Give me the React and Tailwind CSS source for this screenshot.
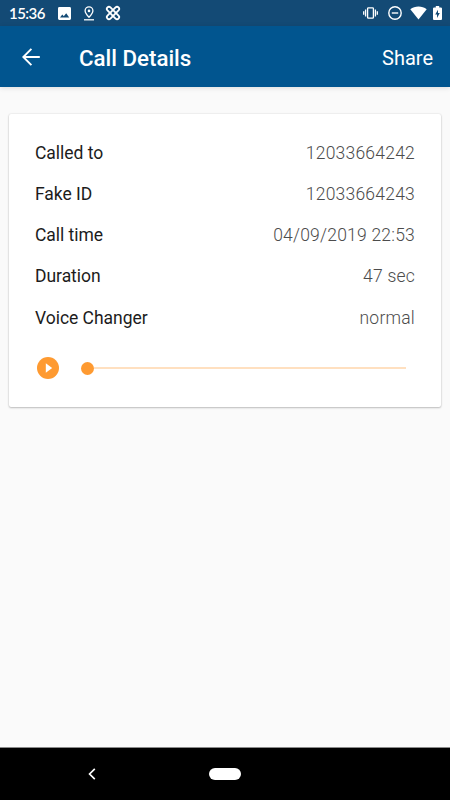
import React from 'react';

const details = [
  { label: 'Called to', value: '12033664242' },
  { label: 'Fake ID', value: '12033664243' },
  { label: 'Call time', value: '04/09/2019 22:53' },
  { label: 'Duration', value: '47 sec' },
  { label: 'Voice Changer', value: 'normal' },
];

function StatusBar() {
  return (
    <div className="h-[26px] shrink-0 bg-[#134a75] text-white flex items-center justify-between pl-[9px] pr-[8px]">
      <div className="flex items-center">
        <span className="w-[49px] pt-px font-['Lato',sans-serif] text-[15px] leading-none font-semibold tracking-[-0.55px]">15:36</span>
        {/* image */}
        <svg className="w-[13px] h-[13px]" viewBox="0 0 13 13">
          <path fill="currentColor" fillRule="evenodd" d="M1.4 0h10.2Q13 0 13 1.4v10.2Q13 13 11.6 13H1.4Q0 13 0 11.6V1.4Q0 0 1.4 0zM2 10.5h9.2L8.2 6.3 5.8 9.3 4.3 7.4z" />
        </svg>
        {/* location pin */}
        <svg className="ml-[12px] w-[12px] h-[15px]" viewBox="0 0 12 15" fill="none" stroke="currentColor" strokeWidth="1.3">
          <path d="M6 11.2C3.4 8.6 2.1 6.7 2.1 4.8a3.9 3.9 0 0 1 7.8 0C9.9 6.7 8.6 8.6 6 11.2z" />
          <circle cx="6" cy="4.9" r="1.3" fill="currentColor" stroke="none" />
          <path d="M1 13.8h10" />
        </svg>
        {/* crossed loops */}
        <svg className="ml-[10px] w-[16px] h-[16px]" viewBox="0 0 16 16" fill="none" stroke="currentColor" strokeWidth="1.8">
          <rect x="5.9" y="0.2" width="4.2" height="15.6" rx="2.1" transform="rotate(45 8 8)" />
          <rect x="5.9" y="0.2" width="4.2" height="15.6" rx="2.1" transform="rotate(-45 8 8)" />
        </svg>
      </div>
      <div className="flex items-center">
        {/* vibrate */}
        <svg className="w-[15px] h-[14px]" viewBox="0 0 15 14" fill="none" stroke="currentColor" strokeWidth="1.3">
          <rect x="4.6" y="1.8" width="5.8" height="10.4" rx="0.8" />
          <path d="M2.6 3.5v7M12.4 3.5v7M0.7 5.2v3.6M14.3 5.2v3.6" />
        </svg>
        {/* do not disturb */}
        <svg className="ml-[10px] w-[14px] h-[14px]" viewBox="0 0 14 14" fill="none" stroke="currentColor" strokeWidth="1.4">
          <circle cx="7" cy="7" r="6.2" />
          <path d="M3.8 7h6.4" />
        </svg>
        {/* wifi */}
        <svg className="ml-[8px] w-[17px] h-[14px]" viewBox="0 0 17 14">
          <path fill="currentColor" d="M8.5 13.6L0.3 3.2C2.6 1.4 5.4.4 8.5.4s5.9 1 8.2 2.8z" />
        </svg>
        {/* battery */}
        <svg className="ml-[6px] w-[9px] h-[14px]" viewBox="0 0 9 14">
          <path fill="currentColor" d="M2.8 0h3.4v1.4h1.6Q9 1.4 9 2.4v10.4Q9 14 8 14H1Q0 14 0 12.8V2.4Q0 1.4 1.2 1.4h1.6z" />
          <path fill="#134a75" d="M5 3.8v3.1h1.8L4 11.9V8.5H2.2z" />
        </svg>
      </div>
    </div>
  );
}

function Header() {
  return (
    <div className="relative h-[61px] shrink-0 bg-[#01558f] text-white flex items-center pl-[22px] pr-[17px] pt-[3px] shadow-[0_1px_5px_rgba(0,0,0,0.12)]">
      <svg className="w-[18px] h-[18px] -mt-[2px]" viewBox="0 0 18 18" fill="none" stroke="currentColor" strokeWidth="1.9">
        <path d="M17.8 9H1.5M9.4 0.9L1.3 9l8.1 8.1" />
      </svg>
      <h1 className="ml-[39px] text-[22.3px] leading-none font-medium">Call Details</h1>
      <span className="ml-auto -mt-px text-[20px] leading-none">Share</span>
    </div>
  );
}

function Player() {
  return (
    <div className="flex items-center h-[22px] pl-[2px] pr-[9px]">
      <svg className="w-[22px] h-[22px]" viewBox="0 0 22 22">
        <circle cx="11" cy="11" r="11" fill="#fe9a31" />
        <path d="M8.8 6.2v9.6l6.4-4.8z" fill="white" />
      </svg>
      <div className="ml-[22px] flex-1 flex items-center">
        <div className="w-[13px] h-[13px] rounded-full bg-[#fe9a31]" />
        <div className="flex-1 h-[2px] bg-[#ffe0c0]" />
      </div>
    </div>
  );
}

export default function App() {
  return (
    <div className="w-[450px] h-[800px] bg-[#fafafa] flex flex-col overflow-hidden font-['Roboto',sans-serif]">
      <StatusBar />
      <Header />
      <main className="flex-1 px-[9px] pt-[27px]">
        <div className="h-[293px] rounded-[2px] bg-white px-[26px] pt-[18px] shadow-[0_1px_2px_rgba(0,0,0,0.22),0_0_2px_rgba(0,0,0,0.14)]">
          {details.map(item => (
            <div key={item.label} className="h-[41.25px] flex items-center justify-between text-[17.5px]">
              <span className="text-[#1c1c1c] tracking-[-0.03px]">{item.label}</span>
              <span className="font-light text-[#4c4c4c] tracking-[0.22px]">{item.value}</span>
            </div>
          ))}
          <div className="pt-[19px]">
            <Player />
          </div>
        </div>
      </main>
      <div className="h-[53px] shrink-0 bg-black border-t border-[#8a8a8a] flex items-center pl-[88px]">
        <svg className="w-[8px] h-[12px]" viewBox="0 0 8 12" fill="none" stroke="white" strokeWidth="1.7">
          <path d="M6.8 0.9L1.6 6l5.2 5.1" />
        </svg>
        <div className="ml-[113px] w-[32px] h-[12px] rounded-full bg-white" />
      </div>
    </div>
  );
}
